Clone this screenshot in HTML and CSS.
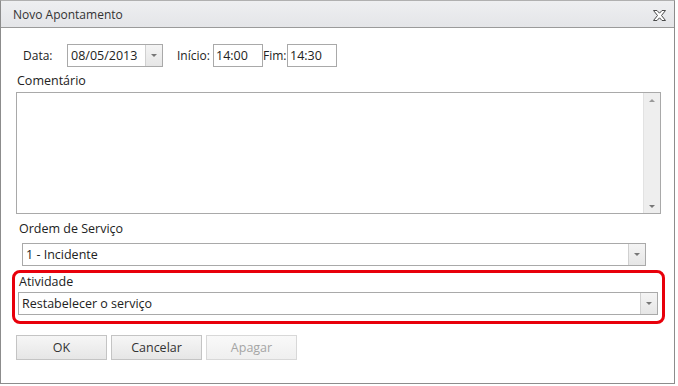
FILE: index.html
```html
<!DOCTYPE html>
<html lang="pt">
<head>
    <meta charset="UTF-8">
    <title>Novo Apontamento</title>
    <link rel="stylesheet" href="styles.css">
</head>
<body>
    <div class="window">
        <div class="titlebar">
            <span class="title">Novo Apontamento</span>
            <span class="close">
                <svg width="13" height="11" viewBox="0 0 13 11">
                    <path d="M0.5 0.5 L4 0.5 L6.5 3.2 L9 0.5 L12.5 0.5 L8.5 5.5 L12.5 10.5 L9 10.5 L6.5 7.8 L4 10.5 L0.5 10.5 L4.5 5.5 Z" fill="#fff" stroke="#4a4a4a" stroke-width="1" stroke-linejoin="round"/>
                </svg>
            </span>
        </div>
        <div class="content">
            <div class="row-date">
                <span class="lbl lbl-data">Data:</span>
                <div class="combo combo-date">
                    <span class="combo-text">08/05/2013</span>
                    <span class="combo-btn"><span class="arrow"></span></span>
                </div>
                <span class="lbl lbl-inicio">Início:</span>
                <div class="field field-time">14:00</div>
                <span class="lbl lbl-fim">Fim:</span>
                <div class="field field-time">14:30</div>
            </div>

            <div class="lbl-block lbl-coment">Comentário</div>
            <div class="memo">
                <div class="memo-text"></div>
                <div class="scrollbar">
                    <span class="arrow arrow-up"></span>
                    <span class="arrow"></span>
                </div>
            </div>

            <div class="lbl-block lbl-ordem">Ordem de Serviço</div>
            <div class="combo combo-ordem">
                <span class="combo-text">1 - Incidente</span>
                <span class="combo-btn"><span class="arrow"></span></span>
            </div>

            <div class="highlight">
                <div class="lbl-block lbl-ativ">Atividade</div>
                <div class="combo combo-ativ">
                    <span class="combo-text">Restabelecer o serviço</span>
                    <span class="combo-btn"><span class="arrow"></span></span>
                </div>
            </div>

            <div class="buttons">
                <button class="btn">OK</button>
                <button class="btn">Cancelar</button>
                <button class="btn btn-disabled">Apagar</button>
            </div>
        </div>
    </div>
</body>
</html>
```

FILE: styles.css
```css
body {
    margin: 0;
    background: #fff;
    font-family: "Open Sans", "Noto Sans", sans-serif;
    font-size: 12.5px;
    color: #222;
}
.window {
    width: 673px;
    height: 382px;
    border: 1px solid #8c8c8c;
    border-top-color: #b0b0b0;
    background: #fff;
}
.titlebar {
    height: 26px;
    border-bottom: 1px solid #9a9a9a;
    background: linear-gradient(#eeeff1, #e4e5e8);
    display: flex;
    align-items: center;
    justify-content: space-between;
    padding: 0 8px 0 12px;
}
.title {
    color: #333;
    font-size: 12px;
}
.close {
    display: flex;
    margin-top: 2px;
}
.content {
    padding: 0 0 0 15px;
}
.row-date {
    display: flex;
    align-items: center;
    margin-top: 16px;
    height: 23px;
    padding-left: 7px;
}
.lbl {
    font-size: 12px;
    flex-shrink: 0;
}
.lbl-data {
    width: 44px;
}
.lbl-inicio {
    margin-left: 14px;
    width: 36px;
}
.lbl-fim {
    width: 24px;
}
.field {
    box-sizing: border-box;
    height: 23px;
    border: 1px solid #a9a9a9;
    padding: 0 2px;
    line-height: 21px;
}
.field-time {
    width: 50px;
}
.combo {
    box-sizing: border-box;
    height: 23px;
    border: 1px solid #a9a9a9;
    display: flex;
    background: #fff;
}
.combo-text {
    flex: 1;
    padding-left: 3px;
    line-height: 21px;
    white-space: nowrap;
}
.combo-btn {
    width: 16px;
    border-left: 1px solid #d0d0d0;
    background: linear-gradient(#f4f4f4, #e6e6e6);
    display: flex;
    align-items: center;
    justify-content: center;
}
.arrow {
    width: 0;
    height: 0;
    border-left: 3px solid transparent;
    border-right: 3px solid transparent;
    border-top: 3px solid #777;
}
.arrow-up {
    border-top: none;
    border-bottom: 3px solid #999;
}
.combo-date {
    width: 96px;
}
.lbl-block {
    height: 20px;
    line-height: 20px;
}
.lbl-coment {
    margin-top: 4px;
    padding-left: 1px;
}
.memo {
    box-sizing: border-box;
    width: 645px;
    height: 122px;
    border: 1px solid #a9a9a9;
    display: flex;
    margin-top: 1px;
}
.memo-text {
    flex: 1;
}
.scrollbar {
    width: 16px;
    background: #eeeeee;
    border-left: 1px solid #e2e2e2;
    display: flex;
    flex-direction: column;
    justify-content: space-between;
    align-items: center;
    padding: 6px 0 5px;
}
.lbl-ordem {
    margin-top: 5px;
    padding-left: 3px;
}
.combo-ordem {
    width: 624px;
    margin-left: 6px;
    margin-top: 4px;
}
.highlight {
    box-sizing: border-box;
    width: 653px;
    height: 54px;
    margin: 4px 0 0 -4px;
    border: 3px solid #e8000b;
    border-radius: 8px;
    padding: 0 0 0 3px;
}
.lbl-ativ {
    height: 19px;
    line-height: 17px;
    padding-left: 1px;
}
.combo-ativ {
    width: 640px;
}
.buttons {
    display: flex;
    gap: 4px;
    margin-top: 11px;
}
.btn {
    width: 91px;
    height: 25px;
    border: 1px solid #c4c4c4;
    background: linear-gradient(#f6f6f6, #e6e6e6);
    font-family: inherit;
    font-size: 12.5px;
    color: #333;
    padding: 0;
}
.btn-disabled {
    color: #a5a5a5;
    border-color: #d8d8d8;
    background: linear-gradient(#f9f9f9, #efefef);
}
```
